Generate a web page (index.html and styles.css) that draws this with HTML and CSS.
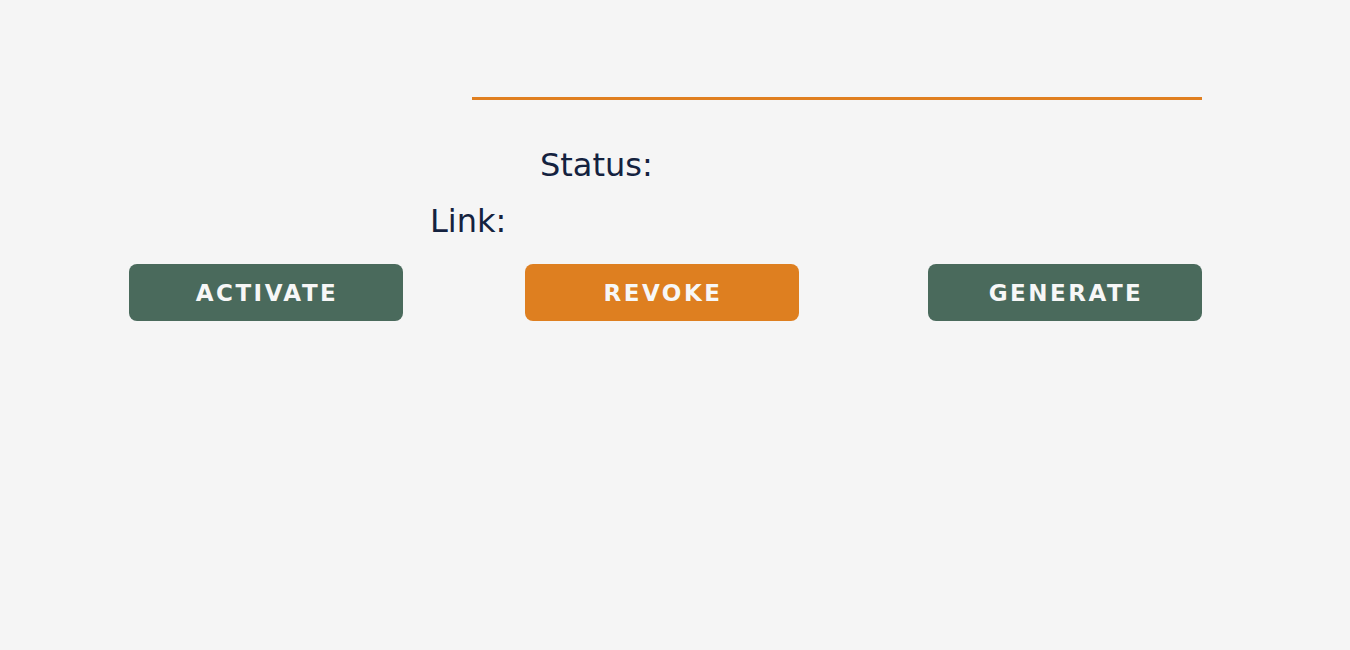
FILE: index.html
```html
<!DOCTYPE html>
<html>
<head>
<meta charset="utf-8">
<link rel="stylesheet" href="styles.css">
</head>
<body>
<main class="panel">
  <div class="rule"></div>
  <div class="field field-status">Status:</div>
  <div class="field field-link">Link:</div>
  <div class="actions">
    <button class="btn btn-green">ACTIVATE</button>
    <button class="btn btn-orange">REVOKE</button>
    <button class="btn btn-green btn-last">GENERATE</button>
  </div>
</main>
</body>
</html>
```
FILE: styles.css
```css
html, body {
  margin: 0;
  padding: 0;
  background: #f5f5f5;
}
body {
  font-family: "DejaVu Sans", "Open Sans", sans-serif;
  color: #14223f;
}
.panel {
  width: 1073px;
  margin-left: 129px;
  padding-top: 97px;
}
.rule {
  margin-left: 343px;
  width: 730px;
  height: 3px;
  background: #e07f20;
}
.field {
  font-size: 32px;
  line-height: 56px;
  font-weight: 400;
}
.field-status {
  margin-top: 37px;
  margin-left: 411px;
}
.field-link {
  margin-left: 301px;
}
.actions {
  margin-top: 15px;
  display: flex;
  gap: 122px;
}
.btn {
  width: 274px;
  height: 57px;
  border: 0;
  border-radius: 8px;
  color: #f7f7f7;
  font-family: "DejaVu Sans", "Open Sans", sans-serif;
  font-weight: 700;
  font-size: 23px;
  letter-spacing: 2.5px;
  padding: 0 0 0 2px;
}
.btn-last { margin-left: auto; }
.btn-green { background: #4a6a5c; }
.btn-orange { background: #de7f20; }
```
